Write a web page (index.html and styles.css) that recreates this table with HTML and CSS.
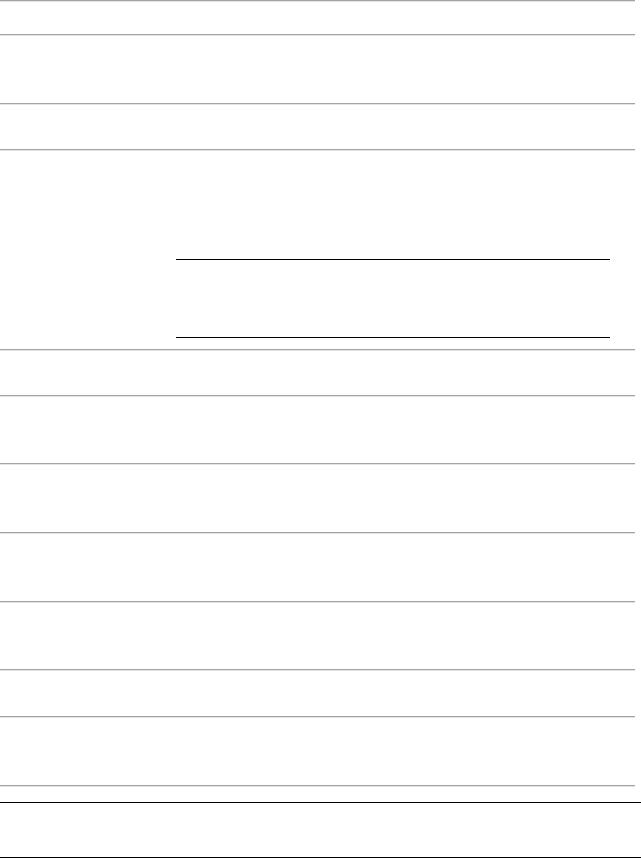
FILE: index.html
```html
<!DOCTYPE html>
<html>
<head>
<meta charset="utf-8">
<link rel="stylesheet" href="styles.css">
</head>
<body>
<div class="sheet">
  <hr class="rule">
  <div class="row r32"></div>
  <hr class="rule">
  <div class="row r67"></div>
  <hr class="rule">
  <div class="row r44"></div>
  <hr class="rule">
  <div class="row tall">
    <div class="label"></div>
    <div class="field">
      <div class="inner"></div>
    </div>
  </div>
  <hr class="rule">
  <div class="row r44"></div>
  <hr class="rule">
  <div class="row r66"></div>
  <hr class="rule">
  <div class="row r67"></div>
  <hr class="rule">
  <div class="row r67"></div>
  <hr class="rule">
  <div class="row r66"></div>
  <hr class="rule">
  <div class="row r45"></div>
  <hr class="rule">
  <div class="row r67"></div>
  <hr class="rule">
</div>
<div class="footer"></div>
</body>
</html>
```
FILE: styles.css
```css
html, body {
  margin: 0;
  padding: 0;
  background: #ffffff;
  font-family: "Liberation Sans", Arial, sans-serif;
}
.sheet {
  width: 635px;
}
.rule {
  margin: 0;
  height: 0;
  border: 0;
  border-top: 1px solid #a3a3a3;
  border-bottom: 1px solid #e3e3e3;
}
.row { display: flex; }
.r32 { height: 32px; }
.r44 { height: 44px; }
.r45 { height: 45px; }
.r66 { height: 66px; }
.r67 { height: 67px; }
.tall { height: 198px; }
.label { width: 176px; flex: none; }
.field {
  width: 434px;
  padding-top: 108px;
}
.inner {
  height: 77px;
  border-top: 1px solid #000;
  border-bottom: 1px solid #000;
}
.footer {
  margin-top: 15px;
  height: 54px;
  border-top: 1px solid #000;
  border-bottom: 1px solid #000;
}
```
